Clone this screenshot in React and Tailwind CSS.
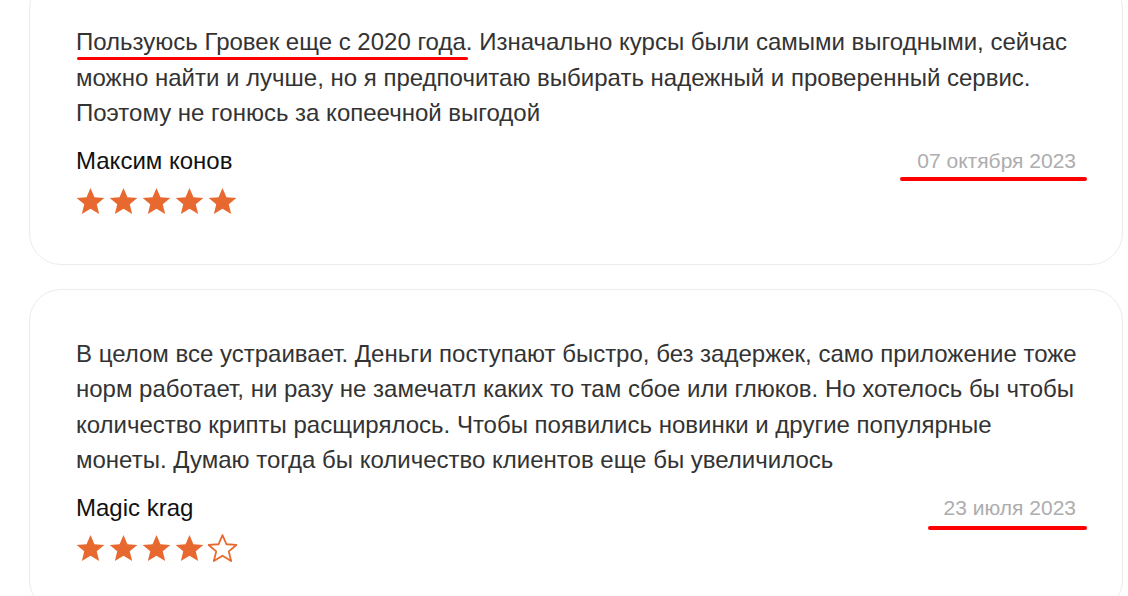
import React from "react";

const reviews = [
  {
    lead: "Пользуюсь Гровек еще с 2020 года",
    text: ". Изначально курсы были самыми выгодными, сейчас можно найти и лучше, но я предпочитаю выбирать надежный и проверенный сервис. Поэтому не гонюсь за копеечной выгодой",
    name: "Максим конов",
    date: "07 октября 2023",
    rating: 5,
    mark: "left-[-17px] right-[-11px] top-[34px]",
  },
  {
    text: "В целом все устраивает. Деньги поступают быстро, без задержек, само приложение тоже норм работает, ни разу не замечатл каких то там сбое или глюков. Но хотелось бы чтобы количество крипты расщирялось. Чтобы появились новинки и другие популярные монеты. Думаю тогда бы количество клиентов еще бы увеличилось",
    name: "Magic krag",
    date: "23 июля 2023",
    rating: 4,
    mark: "left-[-16px] right-[-11px] top-[36px]",
  },
];

const Star = ({ filled }) => (
  <svg width="31" height="31" viewBox="0 0 24 24" className="shrink-0">
    <path
      d="M12 1.6l3.05 7.1 7.65.55-5.85 4.95 1.85 7.5L12 17.6l-6.7 4.1 1.85-7.5L1.3 9.25l7.65-.55z"
      fill={filled ? "#e8692f" : "none"}
      stroke="#e8692f"
      strokeWidth={filled ? 0 : 1.4}
      strokeLinejoin="round"
    />
  </svg>
);

const ReviewCard = ({ review }) => (
  <div className="rounded-[32px] border border-[#ececec] bg-white pl-[46px] pr-[45px] pt-[46px] pb-[47px]">
    <p className="font-['Liberation_Sans',Arial,sans-serif] text-[24px] leading-[35.5px] text-[#333]">
      {review.lead && (
        <span className="relative">
          {review.lead}
          <span className="absolute left-[1px] right-[-2px] top-[29px] h-[3px] rounded-full bg-[#ff0000]" />
        </span>
      )}
      {review.text}
    </p>
    <div className="mt-[12px] flex items-center justify-between font-['Liberation_Sans',Arial,sans-serif]">
      <span className="text-[24px] leading-[36px] text-[#111]">{review.name}</span>
      <span className="relative mr-[1px] text-[21px] leading-[36px] text-[#adadad]">
        {review.date}
        <span className={`absolute h-[4px] rounded-full bg-[#ff0000] ${review.mark}`} />
      </span>
    </div>
    <div className="mt-[7px] ml-[-1px] flex gap-[2px]">
      {[1, 2, 3, 4, 5].map((i) => (
        <Star key={i} filled={i <= review.rating} />
      ))}
    </div>
  </div>
);

export default function App() {
  return (
    <div className="h-[596px] overflow-hidden bg-white">
      <div className="mt-[-23px] ml-[29px] mr-[5px] flex flex-col gap-[24px]">
        {reviews.map((r) => (
          <ReviewCard key={r.name} review={r} />
        ))}
      </div>
    </div>
  );
}
